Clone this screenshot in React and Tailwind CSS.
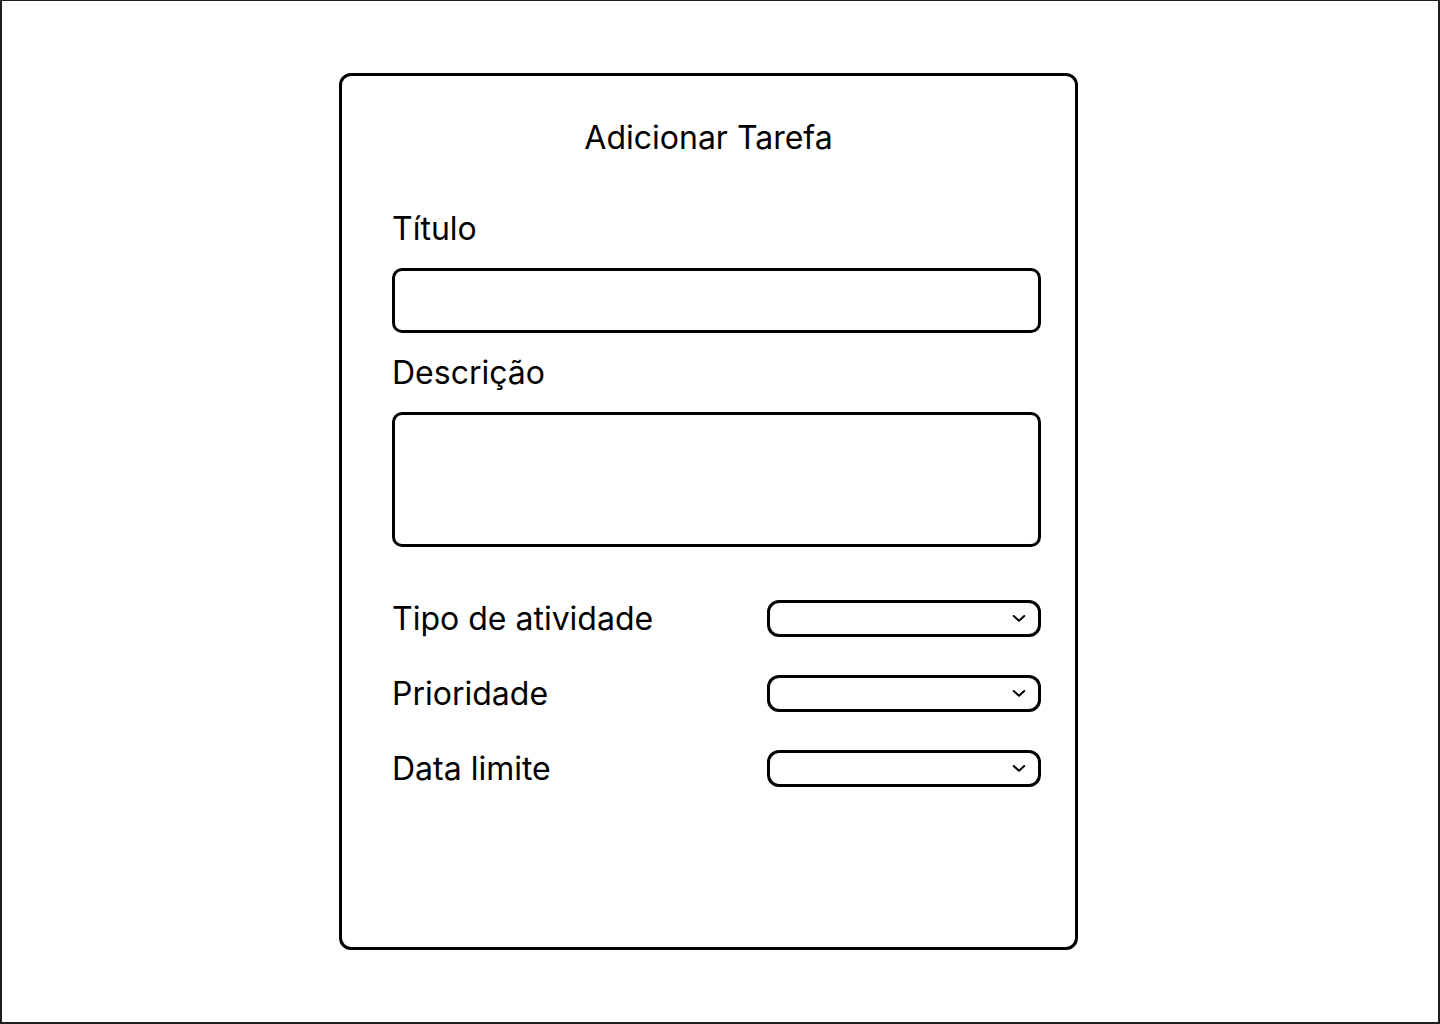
import React from "react";

function Chevron() {
  return (
    <svg width="14" height="9" viewBox="0 0 14 9" fill="none" className="shrink-0">
      <path d="M1.75 2 L7 6.75 L12.25 2" stroke="#000" strokeWidth="2" strokeLinecap="round" strokeLinejoin="round" />
    </svg>
  );
}

function SelectRow({ label }) {
  return (
    <div className="flex items-center justify-between h-[37px]">
      <span className="text-[32px] leading-[38px] text-black">{label}</span>
      <div className="w-[274px] h-[37px] border-[3px] border-black rounded-[12px] flex items-center justify-end pr-[12px]">
        <Chevron />
      </div>
    </div>
  );
}

export default function App() {
  return (
    <div
      className="w-[1440px] h-[1024px] bg-white border-l-2 border-r-2 border-b-2 border-t border-[#1e1e1e] pl-[337px] pt-[72px]"
      style={{ fontFamily: "Inter, 'Noto Sans', sans-serif" }}
    >
      <div className="w-[739px] h-[877px] border-[3px] border-black rounded-[12px] flex flex-col pl-[50px] pr-[34px] pt-[43px]">
        <div className="text-[32px] leading-[38px] text-black text-center -ml-[16px]">Adicionar Tarefa</div>
        <div className="mt-[53px] text-[32px] leading-[38px] text-black">Título</div>
        <div className="mt-[20px] h-[65px] border-[3px] border-black rounded-[10px]" />
        <div className="mt-[21px] text-[32px] leading-[38px] text-black">Descrição</div>
        <div className="mt-[20px] h-[135px] border-[3px] border-black rounded-[10px]" />
        <div className="mt-[53px] flex flex-col gap-[38px]">
          <SelectRow label="Tipo de atividade" />
          <SelectRow label="Prioridade" />
          <SelectRow label="Data limite" />
        </div>
      </div>
    </div>
  );
}
